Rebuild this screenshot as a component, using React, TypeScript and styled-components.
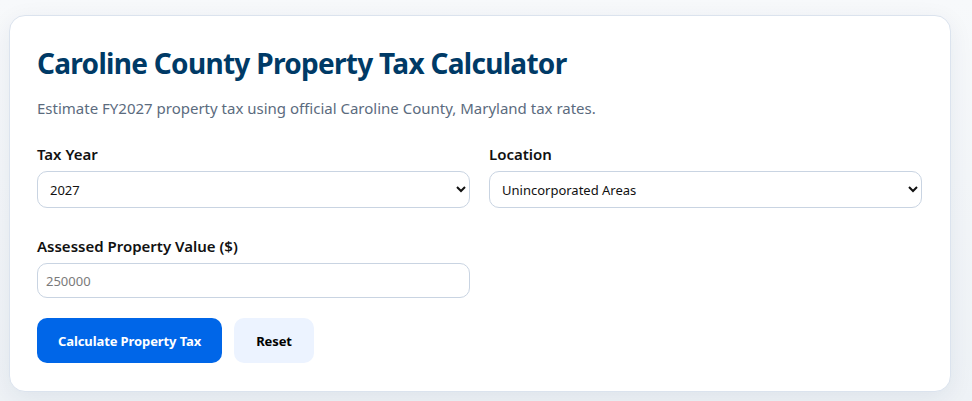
import styled, { createGlobalStyle } from "styled-components";

const GlobalStyle = createGlobalStyle`
  html, body {
    margin: 0;
    padding: 0;
    background: linear-gradient(180deg, #f7f9fb 0%, #eef2f6 100%);
    font-family: "Noto Sans", "Open Sans", sans-serif;
  }
  * { box-sizing: border-box; }
`;

const Page = styled.div`
  min-height: 401px;
  padding: 15px 21px 10px 9px;
`;

const Card = styled.div`
  background: #fff;
  border: 1px solid #dbe3ee;
  border-radius: 16px;
  box-shadow: 0 6px 24px rgba(15, 40, 80, 0.07);
  padding: 26px 28px 28px 27px;
`;

const Title = styled.h1`
  margin: 0;
  font-size: 28px;
  font-weight: 700;
  color: #003a66;
  letter-spacing: -0.7px;
  line-height: 42px;
`;

const Subtitle = styled.p`
  margin: 13px 0 0;
  font-size: 15px;
  color: #5b6b7e;
  line-height: 22px;
`;

const Grid = styled.div`
  display: grid;
  grid-template-columns: 1fr 1fr;
  column-gap: 19px;
  row-gap: 27px;
  margin-top: 24px;
`;

const Field = styled.div`
  display: flex;
  flex-direction: column;
`;

const Label = styled.label`
  font-size: 15px;
  font-weight: 600;
  color: #111;
  line-height: 22px;
  margin-bottom: 6px;
`;

const Select = styled.select`
  height: 37px;
  border: 1px solid #c9d4e2;
  border-radius: 10px;
  padding: 0 8px;
  font-family: "Noto Sans", "Open Sans", sans-serif;
  font-size: 13px;
  color: #111;
  background: #fff;
`;

const Input = styled.input`
  height: 35px;
  border: 1px solid #c9d4e2;
  border-radius: 10px;
  padding: 0 8px;
  font-family: "Noto Sans", "Open Sans", sans-serif;
  font-size: 13px;
  color: #111;
  &::placeholder {
    color: #7a7a7a;
  }
`;

const Actions = styled.div`
  display: flex;
  gap: 12px;
  margin-top: 20px;
`;

const Button = styled.button<{ $primary?: boolean }>`
  height: 45px;
  border: none;
  border-radius: 10px;
  padding: 0 ${(p) => (p.$primary ? "21px" : "22px")};
  font-family: "Noto Sans", "Open Sans", sans-serif;
  font-size: 13px;
  font-weight: 700;
  letter-spacing: -0.1px;
  cursor: pointer;
  background: ${(p) => (p.$primary ? "#0066e8" : "#ecf3ff")};
  color: ${(p) => (p.$primary ? "#fff" : "#000")};
`;

export default function App() {
  return (
    <>
      <GlobalStyle />
      <Page>
        <Card>
          <Title>Caroline County Property Tax Calculator</Title>
          <Subtitle>
            Estimate FY2027 property tax using official Caroline County, Maryland tax rates.
          </Subtitle>
          <Grid>
            <Field>
              <Label>Tax Year</Label>
              <Select defaultValue="2027">
                <option value="2027">2027</option>
                <option value="2026">2026</option>
              </Select>
            </Field>
            <Field>
              <Label>Location</Label>
              <Select defaultValue="uninc">
                <option value="uninc">Unincorporated Areas</option>
                <option value="denton">Denton</option>
              </Select>
            </Field>
            <Field>
              <Label>Assessed Property Value ($)</Label>
              <Input placeholder="250000" />
            </Field>
          </Grid>
          <Actions>
            <Button $primary>Calculate Property Tax</Button>
            <Button>Reset</Button>
          </Actions>
        </Card>
      </Page>
    </>
  );
}
